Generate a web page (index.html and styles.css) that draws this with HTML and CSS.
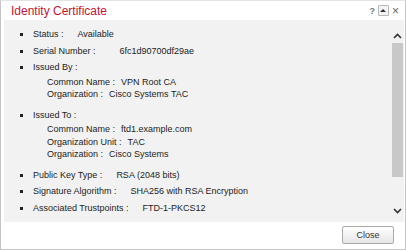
FILE: index.html
```html
<!DOCTYPE html>
<html lang="en">
<head>
  <meta charset="UTF-8">
  <meta name="viewport" content="width=device-width, initial-scale=1.0">
  <title>Identity Certificate</title>
  <link rel="stylesheet" href="styles.css">
</head>
<body>
  <div class="dialog">
    <!-- Encabezado del dialogo -->
    <div class="dialog-header">
      <h1>Identity Certificate</h1>
      <div class="tools">
        <span class="tool-help">?</span>
        <span class="tool-max"><span class="tri"></span></span>
        <span class="tool-close">&times;</span>
      </div>
    </div>

    <!-- Contenido -->
    <div class="dialog-body">
      <div class="scroll-content">
        <ul class="cert-list">
          <li><span class="label">Status :</span><span class="value">Available</span></li>
          <li><span class="label">Serial Number :</span><span class="value wide">6fc1d90700df29ae</span></li>
          <li class="group"><span class="label">Issued By :</span>
            <div class="sub">
              <div class="sub-row"><span class="label">Common Name :</span><span class="value">VPN Root CA</span></div>
              <div class="sub-row"><span class="label">Organization :</span><span class="value">Cisco Systems TAC</span></div>
            </div>
          </li>
          <li class="group"><span class="label">Issued To :</span>
            <div class="sub">
              <div class="sub-row"><span class="label">Common Name :</span><span class="value">ftd1.example.com</span></div>
              <div class="sub-row"><span class="label">Organization Unit :</span><span class="value">TAC</span></div>
              <div class="sub-row"><span class="label">Organization :</span><span class="value">Cisco Systems</span></div>
            </div>
          </li>
          <li><span class="label">Public Key Type :</span><span class="value">RSA (2048 bits)</span></li>
          <li><span class="label">Signature Algorithm :</span><span class="value">SHA256 with RSA Encryption</span></li>
          <li><span class="label">Associated Trustpoints :</span><span class="value">FTD-1-PKCS12</span></li>
        </ul>
      </div>
      <div class="scrollbar">
        <div class="arrow arrow-up">
          <svg width="9" height="6" viewBox="0 0 9 6"><path d="M1 5 L4.5 1.5 L8 5" fill="none" stroke="#333" stroke-width="1.6"/></svg>
        </div>
        <div class="track"><div class="thumb"></div></div>
        <div class="arrow arrow-down">
          <svg width="9" height="6" viewBox="0 0 9 6"><path d="M1 1 L4.5 4.5 L8 1" fill="none" stroke="#333" stroke-width="1.6"/></svg>
        </div>
      </div>
    </div>

    <!-- Pie -->
    <div class="dialog-footer">
      <button type="button" class="button-close">Close</button>
    </div>
  </div>
</body>
</html>
```

FILE: styles.css
```css
/* Estilos generales */
body {
  margin: 0;
  padding: 0;
  font-family: "Liberation Sans", Arial, sans-serif;
  background-color: #ffffff;
}

.dialog {
  width: 406px;
  height: 250px;
  box-sizing: border-box;
  border: 1px solid #c4c4c4;
  border-top-color: #e4e4e4;
  display: flex;
  flex-direction: column;
  background-color: #ffffff;
}

/* Encabezado */
.dialog-header {
  height: 19px;
  display: flex;
  align-items: center;
  justify-content: space-between;
  padding: 0 6px 0 10px;
}

.dialog-header h1 {
  margin: 0;
  font-size: 12px;
  font-weight: normal;
  color: #c41436;
}

.tools {
  display: flex;
  align-items: center;
  gap: 3px;
  color: #666;
  font-size: 10px;
}

.tool-help {
  font-size: 9px;
  font-weight: bold;
  color: #777;
}

.tool-max {
  width: 9px;
  height: 9px;
  border: 1px solid #b8b8b8;
  border-radius: 1px;
  background-color: #f4f4f4;
  display: flex;
  align-items: center;
  justify-content: center;
}

.tool-max .tri {
  width: 0;
  height: 0;
  border-left: 3px solid transparent;
  border-right: 3px solid transparent;
  border-bottom: 3px solid #333;
}

.tool-close {
  font-size: 12px;
  color: #666;
  line-height: 1;
}

/* Cuerpo con scroll */
.dialog-body {
  height: 202px;
  margin: 0 1px 0 3px;
  background-color: #f2f2f2;
  display: flex;
  overflow: hidden;
}

.scroll-content {
  flex: 1;
  padding-top: 6px;
  overflow: hidden;
}

.cert-list {
  list-style: none;
  margin: 0;
  padding: 0;
  font-size: 9px;
  color: #222;
}

.cert-list li {
  line-height: 16.5px;
  padding-left: 16px;
}

.cert-list li::before {
  content: "";
  display: inline-block;
  width: 3px;
  height: 3px;
  background-color: #222;
  margin-right: 10px;
  vertical-align: middle;
}

.cert-list .value {
  margin-left: 14px;
}

.cert-list .value.wide {
  margin-left: 24px;
}

.sub {
  padding-left: 27px;
  margin-bottom: 6px;
}

.sub-row {
  line-height: 12.5px;
}

.sub-row .value {
  margin-left: 6px;
}

/* Barra de desplazamiento */
.scrollbar {
  width: 13px;
  display: flex;
  flex-direction: column;
}

.arrow {
  height: 22px;
  display: flex;
  justify-content: center;
}

.arrow-up {
  align-items: flex-end;
  padding-bottom: 3px;
  box-sizing: border-box;
}

.arrow-down {
  align-items: center;
}

.track {
  flex: 1;
  padding: 1px 1px 0 1px;
}

.thumb {
  height: 134px;
  background-color: #c8c8c8;
}

/* Pie */
.dialog-footer {
  flex: 1;
  display: flex;
  justify-content: flex-end;
  align-items: flex-start;
  padding: 4px 11px 0 0;
}

.button-close {
  width: 52px;
  height: 18px;
  font-family: "Liberation Sans", Arial, sans-serif;
  font-size: 9px;
  color: #333;
  background: linear-gradient(#ffffff, #e6e6e6);
  border: 1px solid #a9a9a9;
  border-radius: 2px;
  padding: 0;
  cursor: pointer;
}
```
